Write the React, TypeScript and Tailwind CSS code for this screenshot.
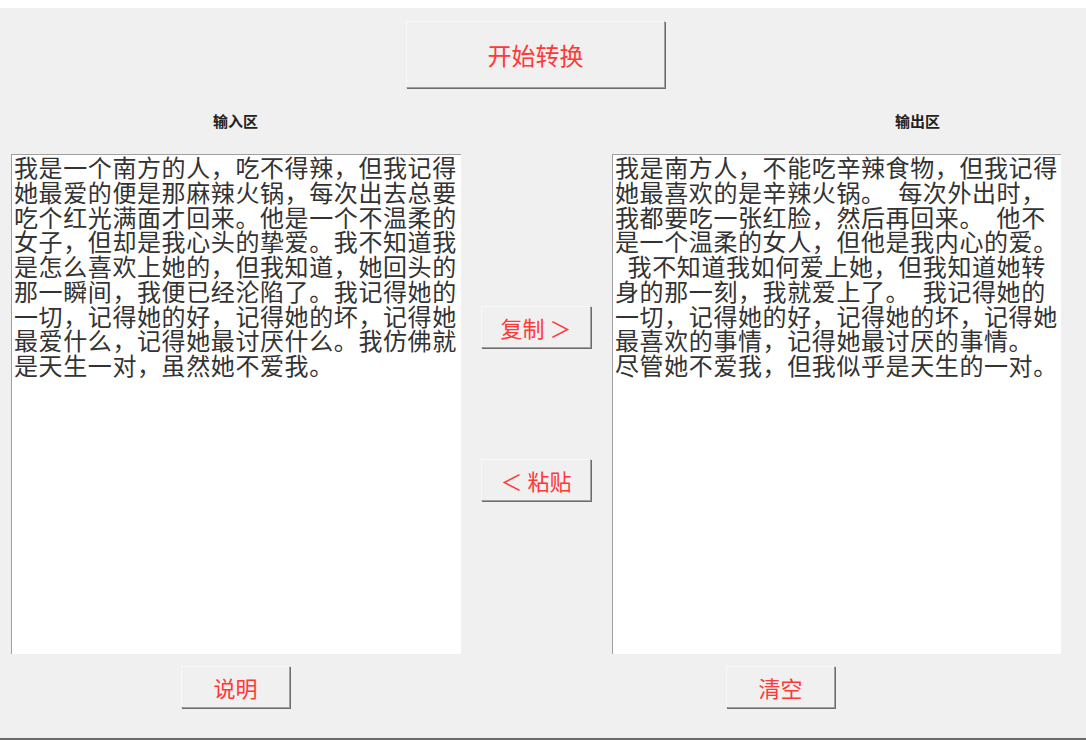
const cjk = { fontFamily: '"Noto Sans CJK SC", "Noto Sans", sans-serif' };

const leftLines = [
  "我是一个南方的人，吃不得辣，但我记得",
  "她最爱的便是那麻辣火锅，每次出去总要",
  "吃个红光满面才回来。他是一个不温柔的",
  "女子，但却是我心头的挚爱。我不知道我",
  "是怎么喜欢上她的，但我知道，她回头的",
  "那一瞬间，我便已经沦陷了。我记得她的",
  "一切，记得她的好，记得她的坏，记得她",
  "最爱什么，记得她最讨厌什么。我仿佛就",
  "是天生一对，虽然她不爱我。",
];

const rightLines = [
  "我是南方人，不能吃辛辣食物，但我记得",
  "她最喜欢的是辛辣火锅。\u2002每次外出时，",
  "我都要吃一张红脸，然后再回来。\u2002他不",
  "是一个温柔的女人，但他是我内心的爱。",
  "\u2002我不知道我如何爱上她，但我知道她转",
  "身的那一刻，我就爱上了。\u2002我记得她的",
  "一切，记得她的好，记得她的坏，记得她",
  "最喜欢的事情，记得她最讨厌的事情。",
  "尽管她不爱我，但我似乎是天生的一对。",
];

function WinButton({ label, className }: { label: string; className: string }) {
  return (
    <button
      className={`flex items-center justify-center bg-[#f0f0f0] border border-t-[#f8f8f8] border-l-[#f8f8f8] border-r-[#a0a0a0] border-b-[#a0a0a0] shadow-[1px_1px_0_#6d6d6d] text-[#ff3838] whitespace-pre ${className}`}
    >
      {label}
    </button>
  );
}

function TextBox({ lines, className }: { lines: string[]; className: string }) {
  return (
    <div
      className={`h-[500px] bg-white border-t border-l border-[#a0a0a0] pl-[2px] text-[24px] leading-[24.75px] tracking-[0.6px] text-[#333] ${className}`}
    >
      {lines.map((line, i) => (
        <div key={i} className="whitespace-pre">
          {line}
        </div>
      ))}
    </div>
  );
}

export default function App() {
  return (
    <div className="w-[1086px] h-[740px] bg-[#f0f0f0] flex flex-col overflow-hidden" style={cjk}>
      <div className="h-[8px] bg-white" />

      <div className="pt-[13px] pl-[406px]">
        <WinButton label="开始转换" className="w-[259px] h-[67px] text-[24px]" />
      </div>

      <div className="mt-[24px] h-[18px] flex text-[15px] leading-[18px] font-bold text-[#222]">
        <span className="ml-[213px]">输入区</span>
        <span className="ml-[637px]">输出区</span>
      </div>

      <div className="mt-[24px] flex">
        <TextBox lines={leftLines} className="ml-[11px] w-[450px]" />
        <div className="w-[151px] flex flex-col pl-[20px]">
          <WinButton label="复制 ＞" className="mt-[152px] w-[110px] h-[42px] text-[22px]" />
          <WinButton label="＜ 粘贴" className="mt-[111px] w-[110px] h-[42px] text-[22px]" />
        </div>
        <TextBox lines={rightLines} className="w-[449px]" />
      </div>

      <div className="mt-[12px] flex">
        <WinButton label="说明" className="ml-[181px] w-[109px] h-[42px] text-[22px]" />
        <WinButton label="清空" className="ml-[436px] w-[109px] h-[42px] text-[22px]" />
      </div>

      <div className="flex-1" />
      <div className="h-[2px] bg-[#6a6a6a]" />
    </div>
  );
}
